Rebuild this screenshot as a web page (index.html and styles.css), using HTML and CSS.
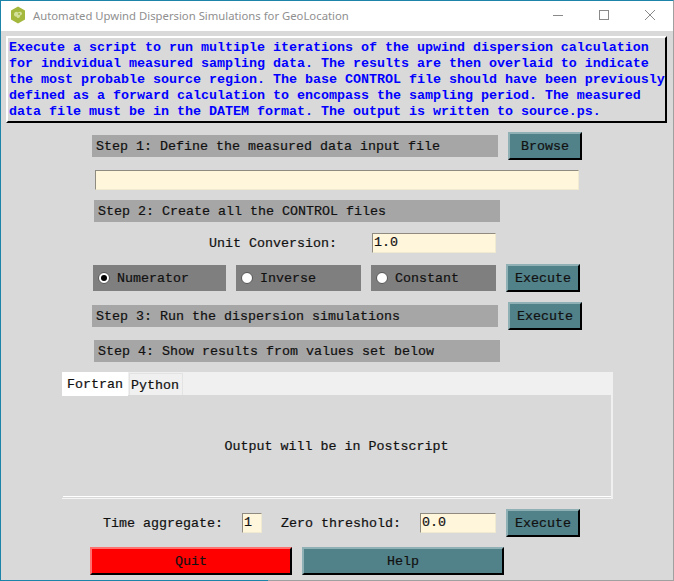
FILE: index.html
```html
<!DOCTYPE html>
<html lang="en">
<head>
<meta charset="utf-8">
<title>Automated Upwind Dispersion Simulations for GeoLocation</title>
<link rel="stylesheet" href="styles.css">
</head>
<body>
<div class="window">
  <header class="titlebar">
    <svg class="app-icon" width="16" height="18" viewBox="0 0 16 18"><polygon points="8,0.5 15,4.5 15,13.5 8,17.5 1,13.5 1,4.5" fill="#a3b83c"/><path d="M4 8.5C4 6 6.5 5 8 6.5C9 5 12 5.5 12 7.5C12 9 10.5 9.5 10 9.5C10.500 11 9 12.500 7.500 12C6.500 11.500 7 10.500 6 10.500C5 10.500 4 10 4 8.500Z" fill="#d3e09a"/><circle cx="9" cy="8" r="1" fill="#a3b83c"/></svg>
    <span class="title">Automated Upwind Dispersion Simulations for GeoLocation</span>
    <div class="controls">
      <svg width="12" height="12" viewBox="0 0 12 12"><path d="M1 6.500H11" stroke="#8a8a8a" fill="none"/></svg>
      <svg width="12" height="12" viewBox="0 0 12 12"><rect x="1.500" y="1.500" width="9" height="9" stroke="#8a8a8a" fill="none"/></svg>
      <svg width="12" height="12" viewBox="0 0 12 12"><path d="M1 1L11 11M11 1L1 11" stroke="#8a8a8a" fill="none"/></svg>
    </div>
  </header>
  <main class="content">
    <p class="desc">Execute a script to run multiple iterations of the upwind dispersion calculation
for individual measured sampling data. The results are then overlaid to indicate
the most probable source region. The base CONTROL file should have been previously
defined as a forward calculation to encompass the sampling period. The measured
data file must be in the DATEM format. The output is written to source.ps.</p>

    <div class="row row-step1">
      <div class="step">Step 1: Define the measured data input file</div>
      <button class="btn btn-side">Browse</button>
    </div>
    <div class="row row-file"><div class="field field-file"></div></div>
    <div class="row row-step2"><div class="step">Step 2: Create all the CONTROL files</div></div>
    <div class="row row-unit">
      <span class="label label-unit">Unit Conversion:</span>
      <div class="field field-unit">1.0</div>
    </div>
    <div class="row row-radio">
      <label class="radio r1"><span class="dot dot-on"></span>Numerator</label>
      <label class="radio r2"><span class="dot"></span>Inverse</label>
      <label class="radio r3"><span class="dot"></span>Constant</label>
      <button class="btn btn-exec">Execute</button>
    </div>
    <div class="row row-step3">
      <div class="step">Step 3: Run the dispersion simulations</div>
      <button class="btn btn-side">Execute</button>
    </div>
    <div class="row row-step4"><div class="step">Step 4: Show results from values set below</div></div>

    <section class="notebook">
      <div class="tabs">
        <div class="tab tab-on">Fortran</div>
        <div class="tab">Python</div>
      </div>
      <div class="pane"><div class="pane-inner">Output will be in Postscript</div></div>
    </section>

    <div class="row row-params">
      <span class="label label-time">Time aggregate:</span>
      <div class="field field-time">1</div>
      <span class="label label-zero">Zero threshold:</span>
      <div class="field field-zero">0.0</div>
      <button class="btn btn-exec">Execute</button>
    </div>
    <div class="row row-bottom">
      <button class="btn btn-wide btn-quit">Quit</button>
      <button class="btn btn-wide">Help</button>
    </div>
  </main>
</div>
</body>
</html>
```
FILE: styles.css
```css
* { box-sizing: border-box; }
html, body { margin: 0; padding: 0; }
body { width: 674px; height: 581px; overflow: hidden; background: #d9d9d9; font-family: "Liberation Mono", "Courier New", monospace; font-size: 13.33px; color: #111; -webkit-text-stroke: 0.2px #111; }
.window { width: 674px; height: 581px; border: 1px solid #a0a0a0; border-top-color: #1c84a8; border-left-color: #1c84a8; display: flex; flex-direction: column; position: relative; background: #d9d9d9; }
.window::after { content: ""; position: absolute; left: -1px; bottom: -1px; width: 268px; height: 1px; background: #1c84a8; }
.titlebar { height: 30px; background: #fff; display: flex; align-items: center; padding: 0 0 2px 9px; flex: none; -webkit-text-stroke: 0; }
.app-icon { flex: none; }
.title { margin-left: 7px; font-family: "Noto Sans", "Open Sans", sans-serif; font-size: 11.3px; color: #8f8f8f; }
.controls { margin-left: auto; display: flex; gap: 34px; padding-right: 17px; align-items: center; }
.content { flex: 1; position: relative; }
.desc { margin: 5px 0 0 5px; width: 661px; height: 87px; padding: 2px 0 0 1px; white-space: pre; font-family: inherit; font-size: 13.33px; font-weight: bold; line-height: 16px; color: #0000ff; -webkit-text-stroke: 0; background: #d9d9d9; border: 2px solid; border-color: #fff #000 #000 #fff; overflow: hidden; }
.row { display: flex; align-items: center; }
.step { width: 406px; height: 22px; line-height: 23px; padding-left: 4px; background: #a6a6a6; color: #111; }
.btn { width: 74px; height: 28px; padding: 0; font: inherit; color: #111; background: #528289; border: 2px solid; border-color: #8fb0b4 #000 #000 #8fb0b4; }
.btn-side { margin-left: 10px; }
.row-step1 { margin: 9px 0 0 91px; }
.row-file { margin: 10px 0 0 94px; }
.field { height: 20px; line-height: 18px; background: #fff6dc; border: 1px solid; border-color: #8f8b80 #f0ead0 #f0ead0 #8f8b80; padding-left: 1px; color: #111; }
.field-file { width: 484px; }
.row-step2 { margin: 10px 0 0 93px; }
.row-unit { margin: 11px 0 0 208px; }
.label-unit { width: 163px; }
.field-unit { width: 124px; }
.row-radio { margin: 11px 0 0 92px; }
.radio { height: 26px; background: #7f7f7f; display: flex; align-items: center; padding-left: 5px; color: #111; }
.r1 { width: 133px; }
.r2 { width: 125px; margin-left: 10px; }
.r3 { width: 125px; margin-left: 10px; }
.dot { width: 12px; height: 12px; border-radius: 50%; background: #fff; border: 1px solid #555; margin-right: 7px; position: relative; flex: none; }
.dot-on::after { content: ""; position: absolute; left: 2px; top: 2px; width: 6px; height: 6px; border-radius: 50%; background: #000; }
.row-radio .btn-exec { margin-left: 10px; }
.row-step3 { margin: 10px 0 0 91px; }
.row-step4 { margin: 10px 0 0 93px; }
.notebook { margin: 10px 0 0 61px; width: 551px; }
.tabs { height: 23px; background: #f0f0f0; display: flex; align-items: flex-start; }
.tab { height: 22px; margin-top: 1px; margin-left: 1px; width: 54px; line-height: 24px; border: 1px solid #e3e3e3; border-bottom: 0; padding-right: 2px; text-align: center; background: #f0f0f0; }
.tab-on { width: 66px; height: 24px; margin: 0; padding: 0; background: #fff; border: 0; line-height: 25px; position: relative; z-index: 1; }
.pane { height: 104px; border-right: 2px solid #f0f0f0; border-bottom: 1px solid #f5f5f5; padding-bottom: 1px; }
.pane-inner { height: 102px; display: flex; align-items: center; justify-content: center; padding: 2px 1px 0 0; border-bottom: 1px solid #fff; margin-left: 1px; }
.row-params { margin: 10px 0 0 102px; }
.label-time { width: 139px; }
.field-time { width: 20px; }
.label-zero { width: 139px; margin-left: 19px; }
.field-zero { width: 76px; }
.row-params .btn-exec { margin-left: 10px; }
.row-bottom { margin: 10px 0 0 89px; gap: 10px; }
.btn-wide { width: 202px; }
.btn-quit { background: #ff0000; border-color: #ff7070 #000 #000 #ff7070; }
```
